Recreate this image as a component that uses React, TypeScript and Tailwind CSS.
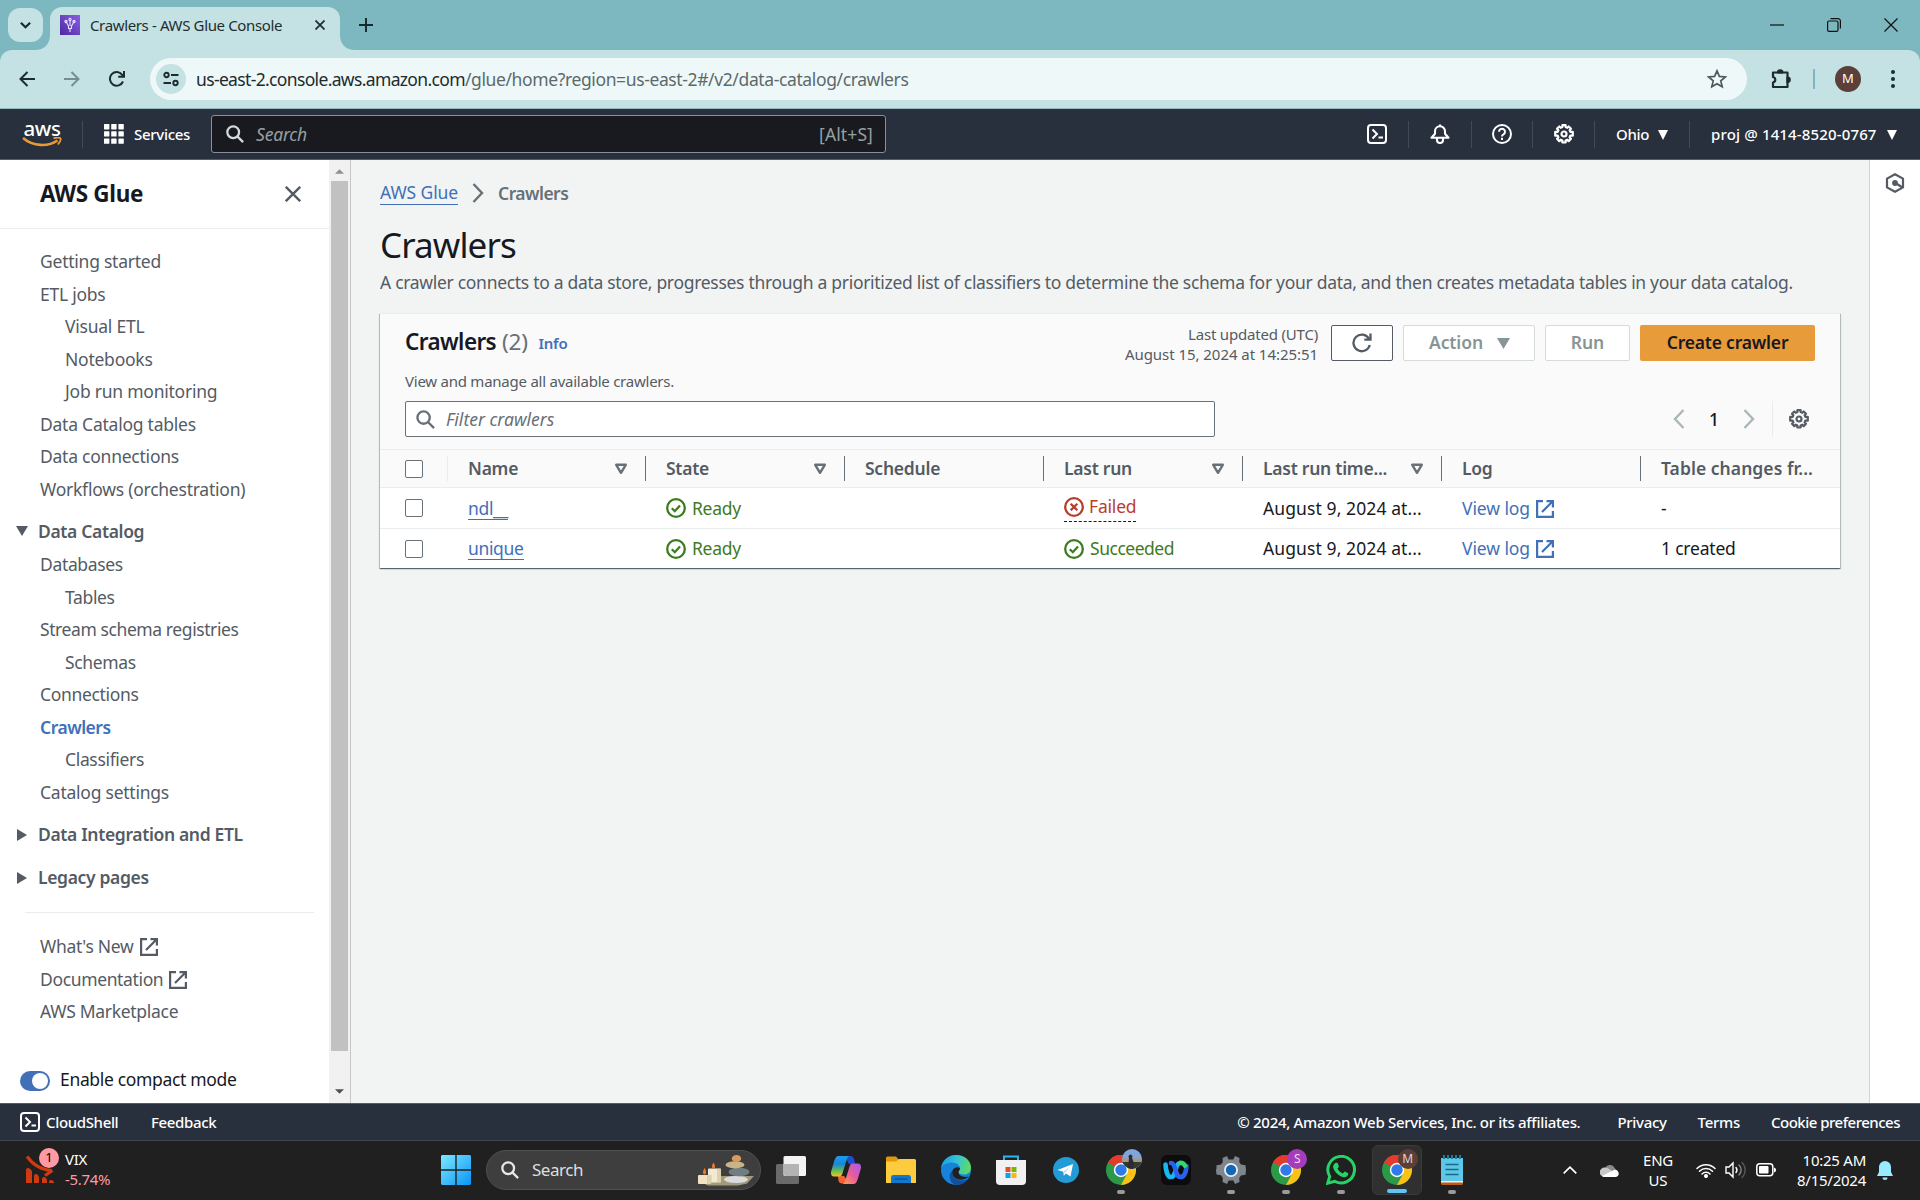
import type { ReactNode } from "react";

/* ---------- shared icons ---------- */

const ExternalIcon = ({ className = "" }: { className?: string }) => (
  <svg viewBox="0 0 18 18" className={"shrink-0 " + className} fill="none" stroke="currentColor" strokeWidth="2.2">
    <path d="M7 1.100H1.100v15.800h15.800V11M10.500 1.100h6.400v6.400M6 12L16.500 1.500" />
  </svg>
);
const ShellIcon = () => (
  <svg viewBox="0 0 20 20" className="size-5 shrink-0" fill="none" stroke="#fff" strokeWidth="2">
    <rect x="1" y="1" width="18" height="18" rx="3" />
    <path d="M5.500 5.500l4.500 4.500-4.500 4.500M11.500 13.500H16" />
  </svg>
);
const GearIcon = ({ className = "" }: { className?: string }) => (
  <svg viewBox="0 0 20 20" className={"size-5 shrink-0 " + className} fill="none" stroke="currentColor" strokeWidth="2.200" strokeLinejoin="round">
    <path d="M8.400 1.200h3.200v1.900l1.700.7 1.400-1.300 2.300 2.300-1.400 1.400.7 1.700h2.500v3.800h-2.500l-.7 1.700 1.400 1.400-2.300 2.300-1.400-1.400-1.700.8v2H8.400v-2l-1.700-.8-1.400 1.400L3 14.800l1.400-1.400-.7-1.700H1.200V7.900h2.500l.7-1.700L3 4.800l2.300-2.300 1.400 1.300 1.700-.7z" />
    <circle cx="10" cy="10" r="2.500" />
  </svg>
);
const SearchIcon = ({ className = "" }: { className?: string }) => (
  <svg viewBox="0 0 20 20" className={"shrink-0 " + className} fill="none" stroke="currentColor" strokeWidth="2.500">
    <circle cx="8" cy="8" r="6.500" />
    <path d="M12.600 12.600L19 19" />
  </svg>
);
const Chevron = ({ left = false, className = "" }: { left?: boolean; className?: string }) => (
  <svg viewBox="0 0 12 20" className={"h-5 w-3 shrink-0 " + className} fill="none" stroke="currentColor" strokeWidth="2.400">
    <path d={left ? "M10.500 1L2 10l8.500 9" : "M1.500 1L10 10l-8.500 9"} />
  </svg>
);
const Caret = ({ className = "" }: { className?: string }) => (
  <svg viewBox="0 0 10 10" className={"shrink-0 " + className} fill="currentColor" preserveAspectRatio="none">
    <path d="M0 0h10L5 10z" />
  </svg>
);
const StatusOk = () => (
  <svg viewBox="0 0 20 20" className="size-5 shrink-0" fill="none" stroke="#3b7d1e" strokeWidth="2.300">
    <circle cx="10" cy="10" r="8.800" />
    <path d="M5.800 10.200l3 3 5.200-5.800" />
  </svg>
);
const StatusFail = () => (
  <svg viewBox="0 0 20 20" className="size-5 shrink-0" fill="none" stroke="#b93d2b" strokeWidth="2.300">
    <circle cx="10" cy="10" r="8.800" />
    <path d="M6.700 6.700l6.600 6.600M13.300 6.700l-6.600 6.600" />
  </svg>
);

/* ---------- browser chrome ---------- */

function TabStrip() {
  return (
    <div className="flex h-[50px] bg-[#7db7bf]">
      <div className="mt-2 ml-2 flex h-[34px] w-[35px] items-center justify-center rounded-xl bg-[#c4e1e3]">
        <svg viewBox="0 0 12 8" className="h-[8px] w-[11px]" fill="none" stroke="#1b2a2c" strokeWidth="2.400">
          <path d="M1 1.500l5 5 5-5" />
        </svg>
      </div>
      <svg viewBox="0 0 15 15" className="mt-auto -ml-[8px] size-[15px] shrink-0" fill="#c4e1e3">
        <path d="M15 0v15H0C9 15 15 9 15 0z" />
      </svg>
      <div className="mt-[7px] flex h-[43px] w-[290px] items-center rounded-t-xl bg-[#c4e1e3] pb-[7px] pl-[10px]">
        <div className="flex size-5 items-center justify-center bg-linear-to-tr from-[#4d2a9e] to-[#8a5ee6]">
          <svg viewBox="0 0 20 20" className="size-5" fill="none" stroke="#e9e0ff" strokeWidth="1.100">
            <path d="M5.500 6L8.500 11v2.500h3V11l3-5M10 5v6M10 13.500V17" />
            <circle cx="10" cy="4.500" r="1.100" />
            <circle cx="6" cy="6.500" r="1.100" />
            <circle cx="14" cy="6.500" r="1.100" />
          </svg>
        </div>
        <span className="ml-[10px] w-[206px] text-[15px] tracking-[-0.360px] whitespace-nowrap text-[#1f2d30]">Crawlers - AWS Glue Console</span>
        <svg viewBox="0 0 10 10" className="ml-[19px] size-[10px]" fill="none" stroke="#1b2a2c" strokeWidth="1.700">
          <path d="M.5.5l9 9M9.500.5l-9 9" />
        </svg>
      </div>
      <svg viewBox="0 0 15 15" className="mt-auto size-[15px] shrink-0" fill="#c4e1e3">
        <path d="M0 0v15h15C6 15 0 9 0 0z" />
      </svg>
      <svg viewBox="0 0 14 14" className="mt-[18px] mr-auto ml-[4px] size-[14px]" fill="none" stroke="#16282b" strokeWidth="1.900">
        <path d="M7 0v14M0 7h14" />
      </svg>
      <div className="flex items-center gap-[43px] pr-[22px] pb-[1px] text-[#111]">
        <svg viewBox="0 0 14 14" className="size-[14px]" fill="none" stroke="currentColor" strokeWidth="1.200">
          <path d="M0 7h14" />
        </svg>
        <svg viewBox="0 0 14 14" className="size-[14px]" fill="none" stroke="currentColor" strokeWidth="1.200">
          <rect x="0.600" y="3" width="10.400" height="10.400" rx="1.500" />
          <path d="M3.500.7H11a2.400 2.400 0 012.400 2.400v7.500" />
        </svg>
        <svg viewBox="0 0 14 14" className="size-[14px]" fill="none" stroke="currentColor" strokeWidth="1.200">
          <path d="M.5.5l13 13M13.500.5l-13 13" />
        </svg>
      </div>
    </div>
  );
}

function AddressBar() {
  return (
    <div className="bg-[#7db7bf]">
      <div className="flex h-[59px] items-center rounded-t-xl border-b border-[#94b9bb] bg-[#c4e1e3] pl-[19px] text-[#1c2b2e]">
        <svg viewBox="0 0 16 16" className="size-[16px]" fill="none" stroke="currentColor" strokeWidth="2">
          <path d="M16 8H1.500M8.500 1L1.500 8l7 7" />
        </svg>
        <svg viewBox="0 0 16 16" className="ml-[29px] size-[16px] opacity-45" fill="none" stroke="currentColor" strokeWidth="2">
          <path d="M0 8h14.500M7.500 1l7 7-7 7" />
        </svg>
        <svg viewBox="0 0 16 16" className="ml-[29px] size-[16px]" fill="none" stroke="currentColor" strokeWidth="2">
          <path d="M14 10.500A6.800 6.800 0 1 1 13.200 3.800L15 5.500M15 0v5.800H9.200" />
        </svg>
        <div className="ml-[25px] flex h-[42px] w-[1597px] items-center rounded-full bg-[#eff8f8] pr-[20px] pl-[6px]">
          <div className="flex size-[30px] items-center justify-center rounded-full bg-[#c4e1e3]">
            <svg viewBox="0 0 16 16" className="size-[16px]" fill="none" stroke="currentColor" strokeWidth="1.900">
              <circle cx="3.500" cy="4" r="2.200" />
              <path d="M8 4h7.500M.5 12H8" />
              <circle cx="12.500" cy="12" r="2.200" />
            </svg>
          </div>
          <div className="ml-[10px] text-[17.500px] whitespace-nowrap">
            <span className="tracking-[-0.650px]">us-east-2.console.aws.amazon.com</span>
            <span className="tracking-[-0.380px] text-[#5c6a6c]">/glue/home?region=us-east-2#/v2/data-catalog/crawlers</span>
          </div>
          <svg viewBox="0 0 20 20" className="ml-auto size-[20px]" fill="none" stroke="#4d5a5c" strokeWidth="1.700">
            <path d="M10 1.800l2.400 5.600 6 .5-4.600 4 1.400 5.900L10 14.700l-5.200 3.100 1.400-5.900-4.600-4 6-.5z" />
          </svg>
        </div>
        <svg viewBox="0 0 22 22" className="ml-[23px] size-[22px]" fill="none" stroke="currentColor" strokeWidth="2.200" strokeLinejoin="round">
          <path d="M3 4.500h14.500V19H3v-4.500a2.800 2.800 0 000-5.500z" />
          <path d="M8 4.500a2.200 2.200 0 014.400 0zM17.500 9.500a2.200 2.200 0 010 4.400z" fill="currentColor" />
        </svg>
        <div className="ml-[21px] h-5 w-[2px] bg-[#7db7bf]" />
        <div className="ml-[20px] flex size-[26px] items-center justify-center rounded-full bg-[#5a4038] text-[13px] text-white">M</div>
        <svg viewBox="0 0 4 18" className="ml-[30px] h-[18px] w-[4px]" fill="currentColor">
          <circle cx="2" cy="2" r="2" />
          <circle cx="2" cy="9" r="2" />
          <circle cx="2" cy="16" r="2" />
        </svg>
      </div>
    </div>
  );
}

/* ---------- AWS header ---------- */

const VRule = () => <div className="h-[27px] w-px bg-[#414a59]" />;

function AwsHeader() {
  return (
    <div className="flex h-[51px] items-center border-b border-[#565b6b] bg-[#282f3d] text-white">
      <div className="mt-[-2px] ml-[22px] w-[40px]">
        <div className="text-center text-[20.500px] leading-[17px] font-medium tracking-[-0.400px]">aws</div>
        <svg viewBox="0 0 40 10" className="h-[10px] w-[40px]" fill="none">
          <path d="M1 1C11 9.500 26 10 35.500 3.500" stroke="#e89a35" strokeWidth="2.600" />
          <path d="M31.500 1.300c3-1 6.500-1 7 0s-.7 4-2.700 6.200" stroke="#e89a35" strokeWidth="1.800" />
        </svg>
      </div>
      <div className="ml-[20px] h-[27px] w-px bg-[#414a59]" />
      <svg viewBox="0 0 20 20" className="ml-[21px] size-5" fill="#fff">
        {[0, 7.2, 14.4].map((y) => [0, 7.2, 14.4].map((x) => <rect key={x + "-" + y} x={x} y={y} width="5.400" height="5.400" rx=".6" />))}
      </svg>
      <span className="ml-[10px] w-[57px] text-[15px] font-medium tracking-[-0.300px]">Services</span>
      <div className="ml-[20px] flex h-[38px] w-[675px] items-center rounded-[3px] border border-[#8a9096] bg-[#191a1f] pr-[12px] pl-[14px]">
        <SearchIcon className="size-[18px] text-[#d5dbdb]" />
        <span className="ml-[12px] text-[17.500px] tracking-[-0.200px] text-[#95a0a3] italic">Search</span>
        <span className="ml-auto text-[17.500px] tracking-[0.120px] text-[#95a0a3]">[Alt+S]</span>
      </div>
      <div className="ml-auto flex items-center pr-[23px] text-[15px] font-medium">
        <ShellIcon />
        <div className="ml-[21px]"><VRule /></div>
        <svg viewBox="0 0 20 20" className="ml-[21px] size-5" fill="none" stroke="#fff" strokeWidth="2.100" strokeLinejoin="round">
          <path d="M10 .5V2M1.500 13.800h17l-3.500-4V7.300a5 5 0 00-10 0v2.500zM7 14v2a3 3 0 006 0v-2" />
        </svg>
        <div className="ml-[21px]"><VRule /></div>
        <svg viewBox="0 0 20 20" className="ml-[20px] size-5" fill="none" stroke="#fff" strokeWidth="2">
          <circle cx="10" cy="10" r="9" />
          <path d="M7 7.800a3 3 0 114.500 2.600c-1.100.6-1.500 1.100-1.500 2.200M10 13.800v2.100" />
        </svg>
        <div className="ml-[20px]"><VRule /></div>
        <GearIcon className="ml-[21px]" />
        <div className="ml-[20px]"><VRule /></div>
        <span className="ml-[21px] w-[34px] tracking-[-0.350px]">Ohio</span>
        <Caret className="mt-[1px] ml-[8px] size-[10px]" />
        <div className="ml-[21px]"><VRule /></div>
        <span className="ml-[21px] w-[168px] tracking-[0.150px] whitespace-nowrap">proj @ 1414-8520-0767</span>
        <Caret className="mt-[1px] ml-[8px] size-[10px]" />
      </div>
    </div>
  );
}

/* ---------- side navigation ---------- */

const NavItem = ({ children, sub = false, className = "" }: { children: ReactNode; sub?: boolean; className?: string }) => (
  <div className={"flex h-[32.500px] items-center text-[17.500px] whitespace-nowrap " + (sub ? "pl-[65px] " : "pl-10 ") + className}>{children}</div>
);

const NavSection = ({ title, open = false, className = "" }: { title: string; open?: boolean; className?: string }) => (
  <div className={"flex items-center pl-4 text-[17.500px] font-semibold tracking-[-0.350px] " + className}>
    <svg viewBox="0 0 12 12" className="mr-[10px] size-[12px]" fill="#545b64">
      <path d={open ? "M0 1h12L6 11z" : "M1 0v12l10-6z"} />
    </svg>
    {title}
  </div>
);

function SideNav() {
  return (
    <div className="flex h-full w-[351px] border-r border-[#c4c8c8] bg-white text-[#545b64]">
      <div className="w-[329px]">
        <div className="flex h-[69px] items-center border-b border-[#eaeded] pr-[28px] pl-10">
          <span className="text-[22.500px] font-bold tracking-[-0.340px] text-[#16191f]">AWS Glue</span>
          <svg viewBox="0 0 16 16" className="ml-auto size-[16px]" fill="none" stroke="#545b64" strokeWidth="2.400">
            <path d="M.8.8l14.400 14.400M15.200.8L.8 15.200" />
          </svg>
        </div>
        <div className="pt-[16px] tracking-[-0.240px]">
          <NavItem>Getting started</NavItem>
          <NavItem>ETL jobs</NavItem>
          <NavItem sub>Visual ETL</NavItem>
          <NavItem sub>Notebooks</NavItem>
          <NavItem sub>Job run monitoring</NavItem>
          <NavItem>Data Catalog tables</NavItem>
          <NavItem>Data connections</NavItem>
          <NavItem>Workflows (orchestration)</NavItem>
        </div>
        <NavSection title="Data Catalog" open className="mt-[9px] h-[34px]" />
        <div className="tracking-[-0.340px]">
          <NavItem>Databases</NavItem>
          <NavItem sub>Tables</NavItem>
          <NavItem className="tracking-[-0.410px]">Stream schema registries</NavItem>
          <NavItem sub>Schemas</NavItem>
          <NavItem>Connections</NavItem>
          <NavItem className="font-semibold tracking-[-0.500px] text-[#4170b9]">Crawlers</NavItem>
          <NavItem sub>Classifiers</NavItem>
          <NavItem className="tracking-[-0.240px]">Catalog settings</NavItem>
        </div>
        <NavSection title="Data Integration and ETL" className="mt-[5px] h-[43px]" />
        <NavSection title="Legacy pages" className="h-[43px]" />
        <div className="mt-[13px] mr-[15px] ml-[25px] h-px bg-[#eaeded]" />
        <div className="pt-[17px] tracking-[-0.300px]">
          <NavItem>What's New<ExternalIcon className="mt-[2px] ml-[6px] size-[18px]" /></NavItem>
          <NavItem className="tracking-[-0.360px]">Documentation<ExternalIcon className="mt-[2px] ml-[6px] size-[18px]" /></NavItem>
          <NavItem>AWS Marketplace</NavItem>
        </div>
        <div className="mt-[36px] flex h-[32px] items-center pl-5">
          <div className="mt-[2px] flex h-5 w-[30px] items-center justify-end rounded-full bg-[#4170b9] pr-[2px]">
            <div className="size-4 rounded-full bg-white" />
          </div>
          <span className="ml-[10px] text-[17.500px] tracking-[-0.330px] text-[#16191f]">Enable compact mode</span>
        </div>
      </div>
      <div className="flex w-[21px] flex-col items-center bg-[#f1f1f1]">
        <svg viewBox="0 0 10 5" className="mt-[9px] h-[5px] w-[9px]" fill="#8f8f8f"><path d="M0 5h10L5 0z" /></svg>
        <div className="mt-[7px] h-[870px] w-[17px] bg-[#c1c1c1]" />
        <svg viewBox="0 0 10 5" className="mt-[38px] h-[5px] w-[9px]" fill="#505050"><path d="M0 0h10L5 5z" /></svg>
      </div>
    </div>
  );
}

/* ---------- crawlers table ---------- */

const Checkbox = () => <div className="size-[18px] rounded-[2px] border-[1.500px] border-[#687078] bg-white" />;

const SortIcon = () => (
  <svg viewBox="0 0 14 12" className="mr-[17px] ml-auto h-[12px] w-[14px] shrink-0" fill="none" stroke="#687078" strokeWidth="2.400" strokeLinejoin="round">
    <path d="M2.200 1.800h9.600L7 9.800z" />
  </svg>
);

const COLS = "grid grid-cols-[68px_198px_199px_199px_199px_199px_199px_199px]";

const HeadCell = ({ children, sort = false, last = false, className = "" }: { children: ReactNode; sort?: boolean; last?: boolean; className?: string }) => (
  <div className={"flex h-[25px] items-center pl-[20px] whitespace-nowrap " + (last ? "" : "border-r border-[#687078] ") + className}>
    {children}
    {sort && <SortIcon />}
  </div>
);

const Cell = ({ children, className = "" }: { children?: ReactNode; className?: string }) => (
  <div className={"flex items-center pl-[20px] whitespace-nowrap " + className}>{children}</div>
);

const TextLink = ({ children }: { children: ReactNode }) => (
  <span className="h-[23px] border-b-[1.500px] border-[#4170b9] leading-[22px] tracking-[-0.350px] text-[#4170b9]">{children}</span>
);

const rows = [
  { name: "ndl__", run: "Failed", changes: "-" },
  { name: "unique", run: "Succeeded", changes: "1 created" },
];

function CrawlersCard() {
  return (
    <div className="mt-[18px] h-[255px] w-[1460px] border-t border-[#eaeded] bg-[#fafafa] shadow-[0_1px_1px_0_rgba(0,28,36,0.45),1px_1px_1px_0_rgba(0,28,36,0.2),-1px_1px_1px_0_rgba(0,28,36,0.2)]">
      <div className="flex h-[61px] pt-[11px] pr-[25px] pl-[25px]">
        <div className="flex h-[34px] items-center">
          <span className="text-[22.500px] font-semibold tracking-[-0.600px] text-[#16191f]">Crawlers</span>
          <span className="ml-[6px] text-[22.500px] tracking-[-0.300px] text-[#687078]">(2)</span>
          <span className="mt-[3px] ml-[11px] text-[15px] font-semibold tracking-[-0.300px] text-[#4170b9]">Info</span>
        </div>
        <div className="-mt-[1px] ml-auto text-right text-[15px] leading-5 text-[#545b64]">
          <div className="tracking-[-0.190px]">Last updated (UTC)</div>
          <div className="tracking-[-0.050px]">August 15, 2024 at 14:25:51</div>
        </div>
        <div className="ml-[13px] flex h-[36px] gap-[10px] text-[17.500px] font-semibold whitespace-nowrap">
          <div className="flex w-[62px] items-center justify-center rounded-[2px] border-[1.500px] border-[#545b64] bg-white">
            <svg viewBox="0 0 20 20" className="size-5" fill="none" stroke="#545b64" strokeWidth="2.300">
              <path d="M17.800 12a8.300 8.300 0 11-.8-6.200M18.500.5v6.200h-6.200" />
            </svg>
          </div>
          <div className="flex w-[132px] items-center rounded-[2px] border border-[#d5dbdb] bg-white pb-[1px] pl-[25px] tracking-[-0.100px] text-[#879596]">
            Action
            <Caret className="mt-[2px] ml-[14px] h-[11px] w-[13px]" />
          </div>
          <div className="flex w-[85px] items-center justify-center rounded-[2px] border border-[#d5dbdb] bg-white pb-[1px] text-[#879596]">Run</div>
          <div className="flex w-[175px] items-center justify-center rounded-[2px] bg-[#e89b3a] pb-[1px] tracking-[-0.200px] text-[#16191f]">Create crawler</div>
        </div>
      </div>
      <div className="pl-[25px] text-[15px] leading-[13px] tracking-[-0.240px] text-[#545b64]">View and manage all available crawlers.</div>
      <div className="mt-[13px] flex h-[36px] items-center pr-[31px] pl-[25px]">
        <div className="flex h-[36px] w-[810px] items-center rounded-[2px] border-[1.500px] border-[#687078] bg-white pl-[10px]">
          <SearchIcon className="size-[19px] text-[#687078]" />
          <span className="ml-[11px] text-[17.500px] text-[#687078] italic">Filter crawlers</span>
        </div>
        <Chevron left className="ml-auto text-[#aab7b8]" />
        <span className="w-[58px] text-center text-[17.500px] font-medium text-[#16191f]">1</span>
        <Chevron className="text-[#aab7b8]" />
        <div className="ml-[17px] h-[36px] w-px bg-[#eaeded]" />
        <GearIcon className="ml-[16px] text-[#545b64]" />
      </div>
      <div className={COLS + " mt-[12px] h-[39px] items-center border-y border-[#eaeded] text-[17.500px] font-semibold tracking-[-0.250px] text-[#545b64]"}>
        <div className="flex h-[25px] items-center border-r border-[#eaeded] pl-[25px]"><Checkbox /></div>
        <HeadCell sort className="pl-[19px]">Name</HeadCell>
        <HeadCell sort>State</HeadCell>
        <HeadCell>Schedule</HeadCell>
        <HeadCell sort>Last run</HeadCell>
        <HeadCell sort>Last run time...</HeadCell>
        <HeadCell>Log</HeadCell>
        <HeadCell last className="tracking-[0.050px]">Table changes fr...</HeadCell>
      </div>
      {rows.map((r, i) => (
        <div key={r.name} className={COLS + " bg-white text-[17.500px] text-[#16191f] " + (i === 0 ? "h-[41px] border-b border-[#eaeded]" : "h-[39px]")}>
          <div className="flex items-center pl-[25px]"><Checkbox /></div>
          <Cell className="pl-[19px]"><TextLink>{r.name}</TextLink></Cell>
          <Cell className="gap-[6px] tracking-[-0.300px] text-[#3f7a24]"><StatusOk />Ready</Cell>
          <Cell />
          <Cell>
            {r.run === "Failed" ? (
              <span className="flex h-[30px] translate-y-[-1px] items-center gap-[5px] border-b border-dashed border-[#16191f] tracking-[-0.200px] text-[#b93d2b]"><StatusFail />Failed</span>
            ) : (
              <span className="flex items-center gap-[6px] tracking-[-0.480px] text-[#3f7a24]"><StatusOk />Succeeded</span>
            )}
          </Cell>
          <Cell className="tracking-[0.100px]">August 9, 2024 at...</Cell>
          <Cell className="tracking-[-0.090px] text-[#4170b9]">View log<ExternalIcon className="mt-[1px] ml-[6px] size-[18px]" /></Cell>
          <Cell className="tracking-[-0.200px]">{r.changes}</Cell>
        </div>
      ))}
    </div>
  );
}

function Main() {
  return (
    <div className="flex-1 bg-[#f2f4f4] pt-[20px] pl-[29px]">
      <div className="flex h-[26px] items-center text-[17.500px]">
        <span className="h-[24px] border-b-[1.500px] border-[#4170b9] leading-[22px] tracking-[-0.100px] text-[#4170b9]">AWS Glue</span>
        <Chevron className="ml-[14px] text-[#687078]" />
        <span className="ml-[14px] font-semibold tracking-[-0.550px] text-[#687078]">Crawlers</span>
      </div>
      <div className="mt-[16px] h-[45px] text-[35px] leading-[45px] tracking-[-0.900px] text-[#16191f]">Crawlers</div>
      <div className="mt-[2px] text-[17.500px] leading-[26px] tracking-[-0.301px] whitespace-nowrap text-[#545b64]">
        A crawler connects to a data store, progresses through a prioritized list of classifiers to determine the schema for your data, and then creates metadata tables in your data catalog.
      </div>
      <CrawlersCard />
    </div>
  );
}

function AwsFooter() {
  return (
    <div className="flex h-[38px] items-center border-t border-b border-t-[#545b6b] border-b-[#414448] bg-[#282f3d] pr-5 pl-5 text-[15px] font-medium whitespace-nowrap text-white">
      <ShellIcon />
      <span className="ml-[6px] w-[105px] tracking-[-0.350px]">CloudShell</span>
      <span className="tracking-[-0.350px]">Feedback</span>
      <span className="mr-[37px] ml-auto tracking-[-0.310px]">© 2024, Amazon Web Services, Inc. or its affiliates.</span>
      <span className="mr-[31px] tracking-[-0.300px]">Privacy</span>
      <span className="mr-[31px] tracking-[-0.300px]">Terms</span>
      <span className="tracking-[-0.500px]">Cookie preferences</span>
    </div>
  );
}

/* ---------- Windows taskbar ---------- */

const Slot = ({ children, running = false, active = false }: { children: ReactNode; running?: boolean; active?: boolean }) => (
  <div className="flex w-[55.100px] justify-center">
    <div className={"relative flex h-[50px] w-[50px] items-center justify-center rounded-md " + (active ? "border border-[#3a3a3a] bg-[#303030]" : "")}>
      {children}
      {(running || active) && (
        <div className={"absolute bottom-[1px] left-1/2 h-[4px] -translate-x-1/2 rounded-full " + (active ? "w-5 bg-[#5fc4f8]" : "w-2 bg-[#9a9a9a]")} />
      )}
    </div>
  </div>
);

const ChromeIcon = ({ badge }: { badge: ReactNode }) => (
  <div className="relative size-[30px]">
    <svg viewBox="0 0 30 30" className="size-[30px]">
      <circle cx="15" cy="15" r="15" fill="#2a9a48" />
      <path d="M15 15L2 7.500A15 15 0 0128 7.500z" fill="#e33b2e" />
      <path d="M2 7.500A15 15 0 0128 7.500L15 8z" fill="#e33b2e" />
      <path d="M15 8h13.300A15 15 0 0115 30l6.200-11.400z" fill="#fbc116" />
      <circle cx="15" cy="15" r="7.200" fill="#fff" />
      <circle cx="15" cy="15" r="5.700" fill="#2f79e8" />
    </svg>
    <div className="absolute -top-[6px] left-[16px]">{badge}</div>
  </div>
);

function Taskbar() {
  return (
    <div className="flex h-[59px] items-center bg-[#202020] pb-[1px] text-white">
      <div className="flex w-[438px] items-center pb-[2px] pl-[26px]">
        <div className="relative size-[28px]">
          <svg viewBox="0 0 28 28" className="size-[28px]" fill="#cf3a10">
            <path d="M0 15q0-2 2-2t4 3v12H0zM8 21q0-2 2-2t3 3v6H8zM16 24q0-2 2-2t3 3v3h-5zM23 27q0-2 2-2t3 2v1h-5z" />
            <path d="M1 1.500C7 10 14 15 26 15.500M19 20.500l7.500-5" fill="none" stroke="#cf3a10" strokeWidth="3.200" />
          </svg>
          <div className="absolute -top-[7px] left-[13px] flex size-5 items-center justify-center rounded-full bg-[#ff99a4] text-[13px] text-black">1</div>
        </div>
        <div className="ml-[11px] text-[15px] leading-5 tracking-[-0.340px]">
          <div>VIX</div>
          <div className="text-[#ff99a4]">-5.74%</div>
        </div>
      </div>

      <svg viewBox="0 0 30 30" className="ml-[3px] size-[30px]">
        <defs>
          <linearGradient id="win" x1="0" y1="0" x2="1" y2="1">
            <stop offset="0" stopColor="#7be9ff" />
            <stop offset="1" stopColor="#0a94f5" />
          </linearGradient>
        </defs>
        <path fill="url(#win)" d="M1 0h13.300v14.300H0V1zM15.700 0H29l1 1v13.300H15.700zM0 15.700h14.300V30H1l-1-1zM15.700 15.700H30V29l-1 1H15.700z" />
      </svg>
      <div className="ml-[15px] flex h-10 w-[275px] items-center rounded-full border border-[#505050] bg-[#3e3e3e] pr-[4px] pl-[14px]">
        <SearchIcon className="size-[18px] text-[#e8e8e8]" />
        <span className="ml-[13px] text-[17px] tracking-[-0.470px] text-[#dedede]">Search</span>
        <svg viewBox="0 0 58 32" className="ml-auto h-[32px] w-[58px]">
          <path d="M2 28l18-6h36l-7 7.500-9 2H10z" fill="#a39a78" />
          <rect x="0" y="21" width="13" height="9" rx="1" fill="#efe3c4" />
          <rect x="10" y="14.500" width="13" height="14" rx="1" fill="#f3e9cd" />
          <path d="M13.500 21v9H9v-9zM23 14.500v14h-4v-14z" fill="#cfc09c" opacity=".6" />
          <path d="M6.500 14c2 3 2 6 0 6.500-2-.5-2-3 0-6.500zM15.500 8.500c2 3 2 5.500 0 6-2-.5-2-3 0-6z" fill="#f2792b" />
          <ellipse cx="38" cy="25.500" rx="12" ry="3.500" fill="#d9dbdf" />
          <ellipse cx="41" cy="18" rx="10.500" ry="4.200" fill="#6f7e83" />
          <ellipse cx="37" cy="10.800" rx="9.500" ry="3.600" fill="#c9b38b" />
          <ellipse cx="38.500" cy="4.500" rx="4.700" ry="3.600" fill="#d99a5b" />
        </svg>
      </div>

      <div className="ml-[2px] flex">
        <Slot>
          <svg viewBox="0 0 30 28" className="h-[28px] w-[30px]">
            <rect x="0" y="8" width="23" height="20" rx="1.500" fill="#6a6a6a" />
            <rect x="7.500" y="0" width="22.500" height="20" rx="1.500" fill="#f3f3f3" />
            <path d="M7.500 8H23v12H9l-1.500-1.500z" fill="#b4b4b4" />
          </svg>
        </Slot>
        <Slot>
          <svg viewBox="0 0 30 28" className="h-[28px] w-[30px]">
            <defs>
              <linearGradient id="cpa" x1="0" y1="0" x2="0" y2="1">
                <stop offset="0" stopColor="#1f9df0" /><stop offset=".4" stopColor="#1687d8" /><stop offset=".7" stopColor="#63b857" /><stop offset="1" stopColor="#f4c61c" />
              </linearGradient>
              <linearGradient id="cpb" x1="1" y1="0" x2="0" y2="1">
                <stop offset="0" stopColor="#a35cf0" /><stop offset=".5" stopColor="#e85a9c" /><stop offset="1" stopColor="#fda64a" />
              </linearGradient>
            </defs>
            <path d="M15 0h4.500c2 0 3 1.500 3.500 3l1.200 5H18l-3-5z" fill="#1d4fd0" />
            <path d="M7 20h6l3 4-1 3.500h-4c-2 0-3-1-3.500-3z" fill="#f4623a" />
            <path d="M7.500 0H19c-2 0-2.800 2-3.400 4l-4 13c-.7 2.500-1.600 3.500-3.600 3.500H3c-3 0-3.500-3-2.600-6l3-10C4.500 1.500 5.500 0 7.500 0z" fill="url(#cpa)" />
            <path d="M22.500 28H11c2 0 2.800-2 3.400-4l4-13c.7-2.500 1.600-3.500 3.600-3.500h5c3 0 3.500 3 2.600 6l-3 10c-1.100 3-2.100 4.500-4.100 4.500z" fill="url(#cpb)" />
          </svg>
        </Slot>
        <Slot>
          <svg viewBox="0 0 30 28" className="h-[28px] w-[30px]">
            <path d="M0 2a1.500 1.500 0 011.500-1.500H10L13 4v3H0z" fill="#e0990b" />
            <path d="M0 5.500h10L13 3h15.500A1.500 1.500 0 0130 4.500V27H0z" fill="#fdcb3e" />
            <path d="M5 27v-5.500A2.500 2.500 0 017.500 19h15a2.500 2.500 0 012.500 2.500V27z" fill="#1278cf" />
            <path d="M8.500 23h13" stroke="#0b4f92" strokeWidth="1.300" />
          </svg>
        </Slot>
        <Slot>
          <svg viewBox="0 0 30 30" className="size-[30px]">
            <defs>
              <linearGradient id="ed" x1="0" y1=".3" x2="1" y2=".5">
                <stop offset="0" stopColor="#1b9de0" /><stop offset=".5" stopColor="#35c3d8" /><stop offset="1" stopColor="#5fdc5c" />
              </linearGradient>
            </defs>
            <circle cx="15" cy="15" r="15" fill="#1583dc" />
            <path d="M11 16c-1 5 4 9.500 9 9.500 4 0 6.500-1.500 8-2.500A15 15 0 0115 30C8 28 7 19 11 16z" fill="#124f9c" />
            <path d="M0 13.500A15 15 0 0115 0c9 0 15 6 15 12.500 0 4.500-3 7-7 7-3.500 0-5.500-1.500-5.500-2.500s1.500-1.500 1.500-4-3-5.500-8-5.500S1 10 0 13.500z" fill="url(#ed)" />
            <path d="M17.500 17c0-1 1.500-1.500 1.500-4 0 0-3-2-6 .5s-2.500 8 3 10.500c3 1.300 8 1 12-2.500-3 1-10.500.5-10.500-4.500z" fill="#202020" />
          </svg>
        </Slot>
        <Slot>
          <svg viewBox="0 0 30 30" className="size-[30px]">
            <path d="M8 6V1.500h14V6" fill="none" stroke="#2bb4ef" strokeWidth="2" />
            <path d="M0 5h30v21a4 4 0 01-4 4H4a4 4 0 01-4-4z" fill="#f1f1f1" />
            <path d="M9.500 12h5v5h-5z" fill="#e84e26" /><path d="M15.500 12h5v5h-5z" fill="#7ab800" />
            <path d="M9.500 18h5v5h-5z" fill="#109fe8" /><path d="M15.500 18h5v5h-5z" fill="#fcb712" />
          </svg>
        </Slot>
        <Slot>
          <svg viewBox="0 0 26 26" className="size-[26px]">
            <circle cx="13" cy="13" r="13" fill="#239bd6" />
            <path d="M4.500 13L20 7l-2.500 12.500-4.500-3-2.200 2.300-.5-4z" fill="#fff" />
            <path d="M10.300 14.800L17 9.500l-5.200 6.200z" fill="#b6d9ec" />
          </svg>
        </Slot>
        <Slot running>
          <ChromeIcon
            badge={
              <svg viewBox="0 0 20 20" className="size-5">
                <defs><clipPath id="av"><circle cx="10" cy="10" r="10" /></clipPath></defs>
                <g clipPath="url(#av)">
                  <path d="M0 0h20v20H0z" fill="#7ea5dc" />
                  <path d="M0 9h20v11H0z" fill="#9c9a94" />
                  <path d="M0 13h20v7H0z" fill="#35392c" />
                  <path d="M7 9a2 2 0 113 0l2 5-1 6H6z" fill="#2b2b38" />
                </g>
              </svg>
            }
          />
        </Slot>
        <Slot>
          <svg viewBox="0 0 30 30" className="size-[30px]">
            <rect width="30" height="30" rx="6" fill="#0c0c0e" />
            <path d="M4.500 9.500c.5 8 2.500 12.500 5.500 12.500s4-4.500 5-8.500 2.500-5.500 4.500-5.500" fill="none" stroke="#17b8f0" strokeWidth="4.600" strokeLinecap="round" />
            <path d="M10 8c3 0 4 5 5 8.500s2.500 5.500 4.500 5.500c3.500 0 5.500-4.500 6-11" fill="none" stroke="#2a62f0" strokeWidth="4.600" strokeLinecap="round" />
            <path d="M19.500 7.800c2 0 3.500 1 4.500 3" fill="none" stroke="#38d66b" strokeWidth="4.600" strokeLinecap="round" />
          </svg>
        </Slot>
        <Slot running>
          <svg viewBox="0 0 30 30" className="size-[30px]">
            <path d="M12.500 4.500L11 1 6.500 3l.3 4L5 9.500l-4.500.8v3l-.5 1.700.5 4.500 4.500.8L6.800 23l-.3 4 4.500 2 1.700-3.500h4.600L19 29l4.500-2-.3-4 1.800-2.500 4.500-.8.500-4.700-.5-4.700-4.500-.8L23.200 7l.3-4L19 1l-1.700 3.500z" fill="#7e858c" />
            <circle cx="15" cy="15" r="7" fill="#eceff1" />
            <circle cx="15" cy="15" r="5.200" fill="#1268b6" />
          </svg>
        </Slot>
        <Slot running>
          <ChromeIcon badge={<div className="flex size-5 items-center justify-center rounded-full bg-[#a53cbb] text-[12px] text-[#f0d8f4]">S</div>} />
        </Slot>
        <Slot running>
          <svg viewBox="0 0 30 30" className="size-[30px]">
            <path d="M1.800 28.200l1.900-6.800a13.300 13.300 0 115 4.900z" fill="none" stroke="#27d366" strokeWidth="3" />
            <path d="M10.600 7.800c.8 0 1 .2 1.300 1l1 2.400c.2.700-1.500 2-1.300 2.600 1 2 2.800 3.600 5 4.600.6.200 1.700-2 2.300-1.800l2.900 1.400c.6.300.5.700.4 1.200-.4 2-2.300 3-4 3-4.700-.4-9.700-5-11-9.500-.4-2.200 1.200-4.900 3.400-4.900z" fill="#27d366" />
          </svg>
        </Slot>
        <Slot active>
          <ChromeIcon badge={<div className="flex size-5 items-center justify-center rounded-full bg-[#5a4038] text-[12px] text-[#e0d6d2]">M</div>} />
        </Slot>
        <Slot running>
          <svg viewBox="0 0 22 30" className="h-[30px] w-[22px]">
            <path d="M0 24h22v4.500a1.500 1.500 0 01-1.500 1.500h-19A1.500 1.500 0 010 28.500z" fill="#c05b12" />
            <path d="M0 25h22v2.500H0z" fill="#f3efe9" />
            <path d="M0 3h22v23H0z" fill="#5cc7e6" />
            <path d="M4.500 9.500h13M4.500 14.500h13M4.500 19.500h13" stroke="#186a85" strokeWidth="1.700" />
            <path d="M3 0v4M7 0v4M11 0v4M15 0v4M19 0v4" stroke="#1a7da0" strokeWidth="2" />
          </svg>
        </Slot>
      </div>

      <div className="ml-auto flex items-center pr-[27px] text-[15px] leading-5">
        <svg viewBox="0 0 14 8" className="h-[8px] w-[14px]" fill="none" stroke="#fff" strokeWidth="1.700">
          <path d="M.7 7.300L7 1.200l6.300 6.100" />
        </svg>
        <svg viewBox="0 0 20 13" className="ml-[23px] h-[13px] w-[20px]">
          <path d="M5 5a5 5 0 019.500-1L18 8 5 10z" fill="#8b8b8b" />
          <path d="M4.500 3.500C8 3 10 6 12 7l-4 6H4.500a4.500 4.500 0 010-9.500z" fill="#c9c9c9" />
          <path d="M2 12l12-6a3.600 3.600 0 012 7H4.500A4 4 0 012 12z" fill="#fff" />
        </svg>
        <div className="ml-[23px] w-[30px] text-center tracking-[-0.200px]">
          <div>ENG</div>
          <div>US</div>
        </div>
        <svg viewBox="0 0 20 15" className="ml-[23px] h-[15px] w-[20px]" fill="none" stroke="#fff" strokeWidth="1.500" strokeLinecap="round">
          <path d="M1 5.500a12.700 12.700 0 0118 0M3.500 8.300a9.200 9.200 0 0113 0M6 11a5.600 5.600 0 018 0" />
          <circle cx="10" cy="13" r="1.300" fill="#fff" />
        </svg>
        <svg viewBox="0 0 21 18" className="ml-[9px] h-[18px] w-[21px]" fill="none" stroke="#fff" strokeWidth="1.400" strokeLinecap="round">
          <path d="M1 6h3l4-4v14l-4-4H1z" />
          <path d="M11 6.500a4 4 0 010 5" />
          <path d="M14 4a7 7 0 010 10" stroke="#888" />
          <path d="M17 1.500a10.500 10.500 0 010 15" stroke="#555" />
        </svg>
        <svg viewBox="0 0 20 14" className="ml-[10px] h-[14px] w-[20px]">
          <rect x=".8" y=".8" width="16" height="12" rx="3" fill="none" stroke="#fff" strokeWidth="1.500" />
          <rect x="3" y="3" width="9.500" height="7.600" rx="1" fill="#fff" />
          <path d="M18 4.500c1.500.5 2 1.500 2 2.500s-.5 2-2 2.500z" fill="#fff" />
        </svg>
        <div className="ml-[20px] w-[70px] text-right tracking-[-0.250px] whitespace-nowrap">
          <div>10:25 AM</div>
          <div>8/15/2024</div>
        </div>
        <svg viewBox="0 0 16 19" className="ml-[11px] h-[19px] w-[16px]" fill="#99ebff">
          <path d="M8 0a6 6 0 016 6v5l2 4H0l2-4V6a6 6 0 016-6zM5.500 16.500h5a2.500 2.500 0 01-5 0z" />
        </svg>
      </div>
    </div>
  );
}

export default function App() {
  return (
    <div className="flex h-[1200px] w-[1920px] flex-col overflow-hidden font-['Noto_Sans',sans-serif]">
      <TabStrip />
      <AddressBar />
      <AwsHeader />
      <div className="flex h-[943px]">
        <SideNav />
        <Main />
        <div className="flex w-[51px] justify-center border-l border-[#d0d4d4] bg-white pt-[13px]">
          <svg viewBox="0 0 20 20" className="size-5" fill="none" stroke="#545b64" strokeWidth="2.200" strokeLinejoin="round">
            <path d="M10 1.200l8 4.400v8.800l-8 4.400-8-4.400V5.600z" />
            <path d="M10.500 10l7 4.500" />
            <circle cx="10" cy="10" r="2.900" fill="#545b64" stroke="none" />
          </svg>
        </div>
      </div>
      <AwsFooter />
      <Taskbar />
    </div>
  );
}
